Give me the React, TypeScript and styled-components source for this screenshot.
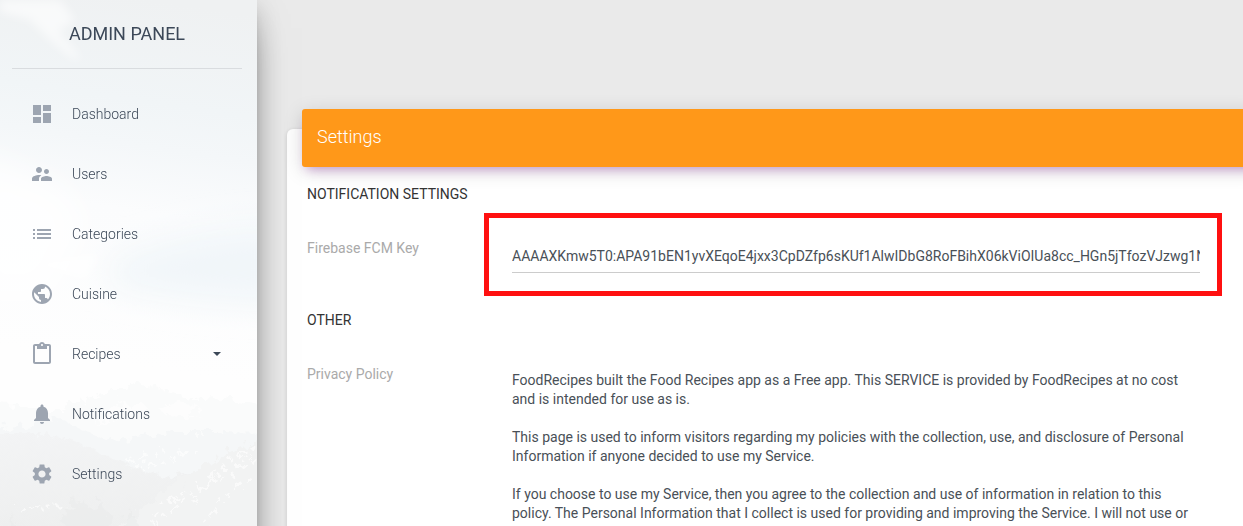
import React from "react";
import styled, { createGlobalStyle } from "styled-components";

const GlobalStyle = createGlobalStyle`
  *, *::before, *::after { box-sizing: border-box; }
  html, body { margin: 0; padding: 0; height: 100%; overflow: hidden; }
  body {
    background: #eaeaea;
    font-family: Roboto, "Liberation Sans", sans-serif;
    font-size: 14px;
    font-weight: 400;
    color: #3c4858;
  }
`;

const Page = styled.div`
  display: flex;
  height: 526px;
  overflow: hidden;
`;

const Sidebar = styled.aside`
  position: relative;
  z-index: 2;
  flex: 0 0 257px;
  height: 640px;
  background: #fdfdfd;
  box-shadow: 0 16px 38px -12px rgba(0, 0, 0, 0.56), 0 4px 25px 0 rgba(0, 0, 0, 0.12),
    0 8px 10px -5px rgba(0, 0, 0, 0.2);
`;

const Backdrop = styled.svg`
  position: absolute;
  inset: 0;
  width: 257px;
  height: 640px;
`;

const SidebarContent = styled.div`
  position: relative;
`;

const Brand = styled.div`
  margin: 0 15px 0 12px;
  height: 69px;
  padding: 19px 0 0;
  border-bottom: 1px solid #d9dcdf;
  text-align: center;
  font-size: 18px;
  line-height: 30px;
  color: #3c4858;
`;

const Nav = styled.nav`
  display: flex;
  flex-direction: column;
  gap: 10px;
  padding: 20px 15px 0;
`;

const NavItem = styled.a`
  display: flex;
  align-items: center;
  height: 50px;
  padding: 0 15px;
  font-size: 14px;
  font-weight: 300;
  color: #3c4858;
`;

const NavIcon = styled.svg`
  width: 24px;
  height: 24px;
  margin-right: 18px;
  fill: #9da5b1;
`;

const Caret = styled.span`
  margin: 0 6px 0 auto;
  border-top: 4px solid #3c4858;
  border-left: 4px solid transparent;
  border-right: 4px solid transparent;
`;

const Main = styled.main`
  flex: 1;
  min-width: 0;
  padding: 129px 0 0 30px;
`;

const Card = styled.section`
  display: flex;
  flex-direction: column;
  width: 990px;
  height: 600px;
  padding: 0 15px;
  border-radius: 6px;
  background: #fff;
  box-shadow: 0 1px 4px 0 rgba(0, 0, 0, 0.14);
`;

const CardHeader = styled.header`
  flex: 0 0 58px;
  margin-top: -20px;
  padding: 0 15px;
  border-radius: 3px;
  background: #ff9819;
  box-shadow: 0 4px 20px 0 rgba(0, 0, 0, 0.14), 0 7px 10px -5px rgba(156, 39, 176, 0.4);
  color: #fff;
  font-size: 18px;
  font-weight: 300;
  line-height: 56px;
`;

const CardBody = styled.div`
  padding: 17px 5px 0;
`;

const SettingsGroup = styled.div`
  margin-bottom: 14px;
`;

const SectionTitle = styled.h2`
  margin: 0 0 9px;
  font-size: 14px;
  font-weight: 400;
  line-height: 20px;
  color: #333;
`;

const Row = styled.div`
  display: flex;
  align-items: flex-start;
`;

const Label = styled.label`
  flex: 0 0 177px;
  padding-top: 25px;
  line-height: 20px;
  color: #aaa;
`;

const Highlight = styled.div`
  width: 738px;
  height: 83px;
  padding: 19px 17px 0 23px;
  border: 5px solid #ff1010;
`;

const KeyField = styled.input`
  display: block;
  width: 100%;
  height: 36px;
  padding: 3px 0 0;
  border: 0;
  border-bottom: 1px solid #ccc;
  outline: 0;
  background: transparent;
  font: inherit;
  color: #495057;
`;

const Policy = styled.div`
  width: 700px;
  margin-left: 28px;
  padding-top: 32px;
  line-height: 19px;
  white-space: pre;
  color: #495057;
`;

const items = [
  { label: "Dashboard", d: "M3 13h8V3H3v10zm0 8h8v-6H3v6zm10 0h8V11h-8v10zm0-18v6h8V3h-8z" },
  {
    label: "Users",
    d: "M16.5 12c1.38 0 2.49-1.12 2.49-2.5S17.88 7 16.5 7 14 8.12 14 9.5s1.12 2.5 2.5 2.5zM9 11c1.66 0 2.99-1.34 2.99-3S10.66 5 9 5 6 6.34 6 8s1.34 3 3 3zm7.5 3c-1.83 0-5.5.92-5.5 2.75V19h11v-2.25c0-1.83-3.67-2.75-5.5-2.75zM9 13c-2.33 0-7 1.17-7 3.5V19h7v-2.25c0-.85.33-2.34 2.37-3.47C10.5 13.1 9.66 13 9 13z",
  },
  {
    label: "Categories",
    d: "M3 13h2v-2H3v2zm0 4h2v-2H3v2zm0-8h2V7H3v2zm4 4h14v-2H7v2zm0 4h14v-2H7v2zM7 7v2h14V7H7z",
  },
  {
    label: "Cuisine",
    d: "M12 2C6.48 2 2 6.48 2 12s4.48 10 10 10 10-4.48 10-10S17.52 2 12 2zm-1 17.93c-3.95-.49-7-3.85-7-7.93 0-.62.08-1.21.21-1.79L9 15v1c0 1.1.9 2 2 2v1.93zm6.9-2.54c-.26-.81-1-1.39-1.9-1.39h-1v-3c0-.55-.45-1-1-1H8v-2h2c.55 0 1-.45 1-1V7h2c1.1 0 2-.9 2-2v-.41c2.93 1.19 5 4.06 5 7.41 0 2.08-.8 3.97-2.1 5.39z",
  },
  {
    label: "Recipes",
    caret: true,
    d: "M19 2h-4.18C14.4.84 13.3 0 12 0c-1.3 0-2.4.84-2.82 2H5c-1.1 0-2 .9-2 2v16c0 1.1.9 2 2 2h14c1.1 0 2-.9 2-2V4c0-1.1-.9-2-2-2zm-7 0c.55 0 1 .45 1 1s-.45 1-1 1-1-.45-1-1 .45-1 1-1zm7 18H5V4h2v3h10V4h2v16z",
  },
  {
    label: "Notifications",
    d: "M12 22c1.1 0 2-.9 2-2h-4c0 1.1.89 2 2 2zm6-6v-5c0-3.07-1.64-5.64-4.5-6.32V4c0-.83-.67-1.5-1.5-1.5s-1.5.67-1.5 1.5v.68C7.63 5.36 6 7.92 6 11v5l-2 2v1h16v-1l-2-2z",
  },
  {
    label: "Settings",
    d: "M19.14 12.94c.04-.3.06-.61.06-.94 0-.32-.02-.64-.07-.94l2.03-1.58c.18-.14.23-.41.12-.61l-1.92-3.32c-.12-.22-.37-.29-.59-.22l-2.39.96c-.5-.38-1.03-.7-1.62-.94l-.36-2.54c-.04-.24-.24-.41-.48-.41h-3.84c-.24 0-.43.17-.47.41l-.36 2.54c-.59.24-1.13.57-1.62.94l-2.39-.96c-.22-.08-.47 0-.59.22L2.74 8.87c-.12.21-.08.47.12.61l2.03 1.58c-.05.3-.09.63-.09.94s.02.64.07.94l-2.03 1.58c-.18.14-.23.41-.12.61l1.92 3.32c.12.22.37.29.59.22l2.39-.96c.5.38 1.03.7 1.62.94l.36 2.54c.05.24.24.41.48.41h3.84c.24 0 .44-.17.47-.41l.36-2.54c.59-.24 1.13-.56 1.62-.94l2.39.96c.22.08.47 0 .59-.22l1.92-3.32c.12-.22.07-.47-.12-.61l-2.01-1.58zM12 15.6c-1.98 0-3.6-1.62-3.6-3.6s1.62-3.6 3.6-3.6 3.6 1.62 3.6 3.6-1.62 3.6-3.6 3.6z",
  },
];

const policy = `FoodRecipes built the Food Recipes app as a Free app. This SERVICE is provided by FoodRecipes at no cost
and is intended for use as is.

This page is used to inform visitors regarding my policies with the collection, use, and disclosure of Personal
Information if anyone decided to use my Service.

If you choose to use my Service, then you agree to the collection and use of information in relation to this
policy. The Personal Information that I collect is used for providing and improving the Service. I will not use or`;

const MountainBackdrop = () => (
  <Backdrop viewBox="0 0 257 640" aria-hidden="true">
    <defs>
      <linearGradient id="sky" gradientUnits="userSpaceOnUse" x1="150" y1="0" x2="90" y2="400">
        <stop offset="0" stopColor="#eff1f2" />
        <stop offset="0.25" stopColor="#f1f5f7" />
        <stop offset="0.36" stopColor="#f4f7f9" />
        <stop offset="0.52" stopColor="#fbfcfd" />
        <stop offset="0.9" stopColor="#fefefe" />
        <stop offset="1" stopColor="#fefefe" />
      </linearGradient>
      <linearGradient id="haze" gradientUnits="userSpaceOnUse" x1="0" y1="430" x2="0" y2="530">
        <stop offset="0" stopColor="#f3f4f5" />
        <stop offset="1" stopColor="#eeefef" />
      </linearGradient>
      <filter id="cloud" x="-30%" y="-30%" width="160%" height="160%">
        <feGaussianBlur stdDeviation="5" />
      </filter>
      <filter id="mist" x="-40%" y="-40%" width="180%" height="180%">
        <feGaussianBlur stdDeviation="16" />
      </filter>
      <filter id="ridge" x="-10%" y="-10%" width="120%" height="120%">
        <feTurbulence type="fractalNoise" baseFrequency="0.12" numOctaves="3" seed="4" result="noise" />
        <feDisplacementMap in="SourceGraphic" in2="noise" scale="16" result="rough" />
        <feGaussianBlur in="rough" stdDeviation="0.6" />
      </filter>
    </defs>
    <rect width="257" height="640" fill="url(#sky)" />
    <g filter="url(#mist)">
      <path d="M-30 150L60 185 90 220 50 300-30 300z" fill="#fff" opacity="0.7" />
      <path d="M110 262Q190 225 290 225V305Q190 305 110 285z" fill="#f1f6f9" />
    </g>
    <g filter="url(#cloud)" fill="#fff">
      <path d="M0 0H60L75 20 58 32 68 42 82 60 72 58 50 40 30 20 0 12z" opacity="0.6" />
      <path d="M25 260l75-6-14 26-60-14z" opacity="0.6" />
    </g>
    <g filter="url(#ridge)">
      <path d="M-15 405L25 406 50 412 80 402 105 393 135 383 160 388 190 399 225 398 275 408V655H-15z" fill="#fafbfb" />
      <path d="M-15 428L35 425 60 418 85 431 110 441 145 437 175 432 210 432 275 433V655H-15z" fill="#f5f7f8" />
      <path d="M-15 433L45 433 85 444 120 463 170 478 205 468 275 435V655H-15z" fill="url(#haze)" />
      <path d="M95 425l18-17 12-8 5 8 12-6 9 10-17 4-8-4-18 10zM158 408l17-6 26 5-17 8 22 4-39-3z" fill="#fff" opacity="0.55" />
      <path d="M120 526L175 484 215 458 275 434V655H110z" fill="#f2f3f3" />
      <path
        d="M256 447l-27 15-22 17M254 457l-18 15-29 13-14 17M215 478l-36 25-23 22M249 476l-23 19-22 28M187 493l-27 12-9 17M135 467l27-4 20-9 19-2M128 462l15-5 21-7M20 510l34-5 25 6"
        fill="none"
        stroke="#fff"
        strokeWidth="3"
        strokeDasharray="6 4 11 5 4 6"
        opacity="0.6"
      />
      <path
        d="M63 540l3-30-3-2 7-3 3-10 3 8 8-2 5 8 7-2 3-9 4 10 8 5-3 6 8 23zM10 540l4-25 5 25zM122 540l7-32 6 12 9 22z"
        fill="#e9ebeb"
        opacity="0.55"
      />
    </g>
  </Backdrop>
);

export default function App() {
  return (
    <>
      <GlobalStyle />
      <Page>
        <Sidebar>
          <MountainBackdrop />
          <SidebarContent>
            <Brand>ADMIN PANEL</Brand>
            <Nav>
              {items.map((item) => (
                <NavItem key={item.label}>
                  <NavIcon viewBox="0 0 24 24">
                    <path d={item.d} />
                  </NavIcon>
                  {item.label}
                  {item.caret && <Caret />}
                </NavItem>
              ))}
            </Nav>
          </SidebarContent>
        </Sidebar>
        <Main>
          <Card>
            <CardHeader>Settings</CardHeader>
            <CardBody>
              <SettingsGroup>
                <SectionTitle>NOTIFICATION SETTINGS</SectionTitle>
                <Row>
                  <Label htmlFor="fcm-key">Firebase FCM Key</Label>
                  <Highlight>
                    <KeyField
                      id="fcm-key"
                      type="text"
                      spellCheck={false}
                      defaultValue="AAAAXKmw5T0:APA91bEN1yvXEqoE4jxx3CpDZfp6sKUf1AlwIDbG8RoFBihX06kViOIUa8cc_HGn5jTfozVJzwg1N"
                    />
                  </Highlight>
                </Row>
              </SettingsGroup>
              <SettingsGroup>
                <SectionTitle>OTHER</SectionTitle>
                <Row>
                  <Label>Privacy Policy</Label>
                  <Policy>{policy}</Policy>
                </Row>
              </SettingsGroup>
            </CardBody>
          </Card>
        </Main>
      </Page>
    </>
  );
}
